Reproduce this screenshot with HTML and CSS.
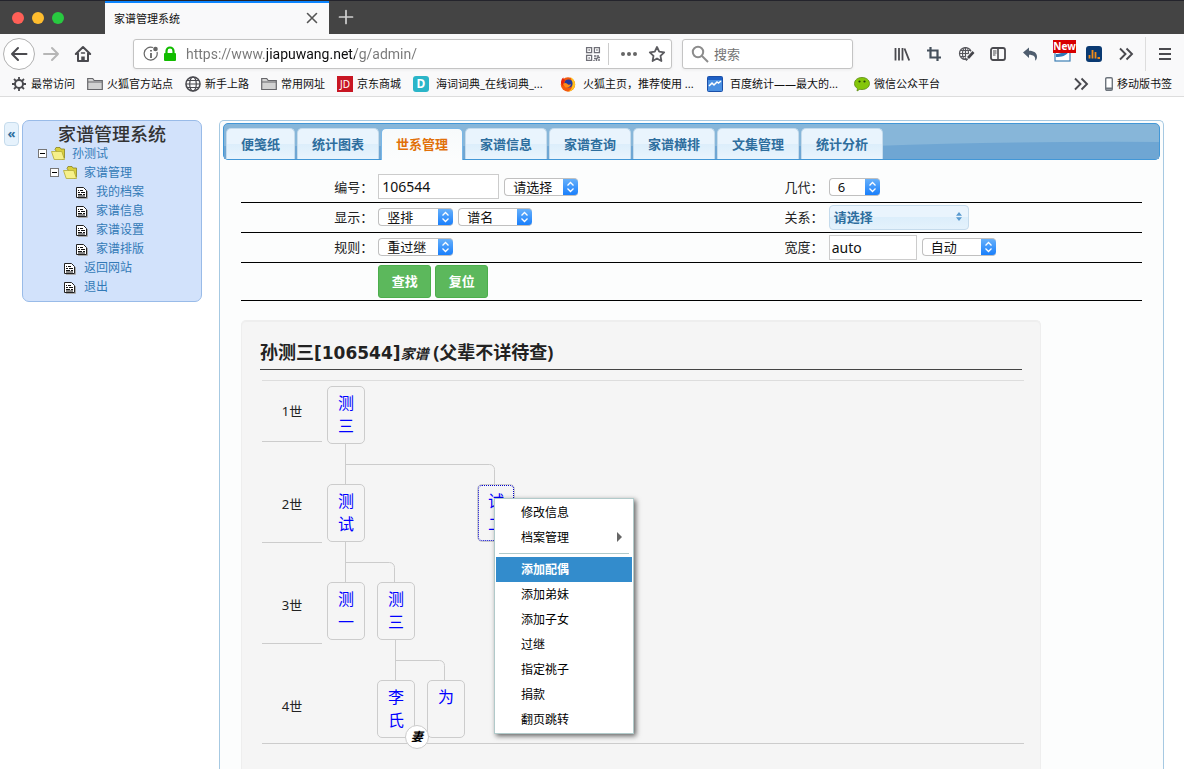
FILE: index.html
```
<!DOCTYPE html>
<html lang="zh-CN">
<head>
  <meta charset="UTF-8">
  <meta name="viewport" content="width=device-width, initial-scale=1.0">
  <title>家谱管理系统</title>
  <link rel="stylesheet" href="styles.css">
</head>
<body>
  <header class="browser">
    <div class="titlebar">
      <div class="lights">
        <span class="light red"></span>
        <span class="light yellow"></span>
        <span class="light green"></span>
      </div>
      <div class="browser-tab">
        <span>家谱管理系统</span>
        <button class="icon-btn tab-close" aria-label="关闭">
          <svg width="12" height="12" viewBox="0 0 12 12"><path d="M1.5 1.5l9 9M10.5 1.5l-9 9" stroke="#555" stroke-width="1.6" stroke-linecap="round"/></svg>
        </button>
      </div>
      <button class="icon-btn tab-new" aria-label="新标签">
        <svg width="16" height="16" viewBox="0 0 16 16"><path d="M8 1.500v13M1.500 8h13" stroke="#d0d0d0" stroke-width="1.700" stroke-linecap="round"/></svg>
      </button>
    </div>

    <div class="toolbar">
      <button class="icon-btn back" aria-label="后退">
        <svg width="18" height="18" viewBox="0 0 18 18" fill="none" stroke="#4a4a4f" stroke-width="2" stroke-linecap="round" stroke-linejoin="round"><path d="M16.500 9H2M8 3L2 9l6 6"/></svg>
      </button>
      <button class="icon-btn" aria-label="前进">
        <svg width="18" height="18" viewBox="0 0 18 18" fill="none" stroke="#b6b6b6" stroke-width="2" stroke-linecap="round" stroke-linejoin="round"><path d="M2 9h14M10 3l6 6-6 6"/></svg>
      </button>
      <button class="icon-btn" aria-label="主页">
        <svg width="18" height="18" viewBox="0 0 18 18" fill="none" stroke="#4a4a4f" stroke-width="2" stroke-linejoin="round" stroke-linecap="round"><path d="M1.800 9L9 2l7.200 7M4 8.500V16h10V8.500"/><path d="M9 16v-4.500" stroke-width="3.500" stroke-linecap="butt"/><path d="M7.500 8h3" stroke-width="1.500"/></svg>
      </button>
      <div class="urlbar">
        <svg width="16" height="16" viewBox="0 0 16 16" fill="none" stroke="#666"><path d="M10 1.500A6.500 6.500 0 1 0 14 6" stroke-width="1.200"/><path d="M8 7v5M8 4v1.600" stroke-width="1.800"/><circle cx="12.500" cy="3" r="2.300" fill="#666" stroke="none"/></svg>
        <svg class="lock" width="14" height="16" viewBox="0 0 14 16"><path d="M3.500 8V5a3.500 3.500 0 0 1 7 0v3" fill="none" stroke="#12bc00" stroke-width="2.200"/><rect x="1" y="7" width="12" height="8" rx="1" fill="#12bc00"/></svg>
        <input class="url-input" type="text" aria-label="地址" value="https://www.jiapuwang.net/g/admin/">
        <svg width="16" height="16" viewBox="0 0 16 16" fill="none" stroke="#707078" stroke-width="1.300"><path d="M1.600 1.600h5v5h-5zM9.400 1.600h5v5h-5zM1.600 9.400h5v5h-5z"/><path d="M3.500 4h1.300M11.300 4h1.300M3.500 12h1.300M9 10h2.500M13 9v2.500h2M9 12.500h2.500v2.500M13 14h2M9 15v-1M12 12h1" stroke-width="1.500"/></svg>
        <span class="url-sep"></span>
        <svg width="18" height="16" viewBox="0 0 18 16" fill="#666"><circle cx="3" cy="8" r="2"/><circle cx="9" cy="8" r="2"/><circle cx="15" cy="8" r="2"/></svg>
        <svg class="star" width="18" height="18" viewBox="0 0 18 18"><path d="M9 2l2.200 4.700 5 .7-3.700 3.500.9 5.100L9 13.500 4.600 16l.9-5.100L1.800 7.400l5-.7z" fill="none" stroke="#5c5c60" stroke-width="1.800" stroke-linejoin="round"/></svg>
      </div>
      <div class="searchbar">
        <svg width="18" height="18" viewBox="0 0 18 18" fill="none" stroke="#8c8c8c" stroke-width="2"><circle cx="7" cy="7" r="5.200"/><path d="M11 11l6 6"/></svg>
        <input class="search-input" type="text" placeholder="搜索" aria-label="搜索">
      </div>
      <div class="toolbar-icons">
        <button class="icon-btn" aria-label="我的足迹">
          <svg width="16" height="16" viewBox="0 0 16 16" stroke="#4a4a4f" stroke-width="1.800"><path d="M1.500 2v12.500M5 2v12.500M8.500 2v12.500M10.500 2.500l4.700 12"/></svg>
        </button>
        <button class="icon-btn" aria-label="截图">
          <svg width="16" height="16" viewBox="0 0 16 16" fill="none" stroke="#45505c" stroke-width="2.200"><path d="M4.500 1v10.500H15M1 4.500h10.500V15"/></svg>
        </button>
        <button class="icon-btn" aria-label="网页工具">
          <svg width="17" height="16" viewBox="0 0 17 16" fill="none" stroke="#55555a" stroke-width="1.200"><circle cx="7.500" cy="7.500" r="6"/><ellipse cx="7.500" cy="7.500" rx="3" ry="6"/><path d="M1.500 7.500h12M2.500 4.500h10M2.500 10.500h7M7.500 1.500v12"/><path d="M15.500 6.500L9 13" stroke="#f9f9fa" stroke-width="5"/><path d="M15.500 6l-5.500 6" stroke="#45454a" stroke-width="2.600"/><path d="M9.500 12.500L8 14.500" stroke-width="1.500"/></svg>
        </button>
        <button class="icon-btn" aria-label="侧栏">
          <svg width="16" height="16" viewBox="0 0 16 16" fill="none" stroke="#4a4a4f"><rect x="1" y="2" width="14" height="12" rx="2" stroke-width="1.800"/><path d="M8 2v12" stroke-width="1.600"/><path d="M3 5h3.500M3 7h3.500M3 9h2.500" stroke-width="1"/></svg>
        </button>
        <button class="icon-btn" aria-label="撤销">
          <svg width="16" height="16" viewBox="0 0 16 16"><path d="M1 6.500L7 1.500v3.200c5 0 8 2.300 8 6 0 2-.7 3-2 4 1-4-1.500-6-6-6v3.300z" fill="#4f5d6e"/></svg>
        </button>
        <button class="icon-btn new-btn" aria-label="新消息">
          <svg width="17" height="16" viewBox="0 0 17 16"><rect x="1" y="2" width="15" height="13" fill="#fff" stroke="#3d7fb5" stroke-width="1.200"/><path d="M2 8c4 0 7-2 13-3-2 5-8 6-13 6z" fill="#3179b5"/></svg>
          <span class="new-badge">New</span>
        </button>
        <button class="icon-btn" aria-label="统计">
          <svg width="16" height="16" viewBox="0 0 16 16"><rect width="16" height="16" rx="3" fill="#0a3a72"/><path d="M3.500 12.500V9M6.500 12.500V4M9.500 12.500V6M11.500 12h2.500" stroke="#f08c1a" stroke-width="1.800"/></svg>
        </button>
        <button class="icon-btn" aria-label="更多工具">
          <svg width="16" height="16" viewBox="0 0 16 16" fill="none" stroke="#4a4a4f" stroke-width="1.900"><path d="M2 2.500L7.500 8 2 13.500M8.500 2.500L14 8l-5.500 5.500"/></svg>
        </button>
      </div>
      <span class="toolbar-sep"></span>
      <button class="icon-btn" aria-label="菜单">
        <svg width="16" height="16" viewBox="0 0 16 16" stroke="#4a4a4f" stroke-width="2"><path d="M2 3h12M2 8h12M2 13h12"/></svg>
      </button>
    </div>

    <nav class="bookmarks">
      <a href="#"><svg width="16" height="16" viewBox="0 0 16 16" fill="none" stroke="#4a4a4f"><circle cx="8" cy="8" r="4" stroke-width="2"/><path d="M8 1v3M8 12v3M1 8h3M12 8h3M3 3l2.200 2.200M10.800 10.800L13 13M13 3l-2.200 2.200M5.200 10.800L3 13" stroke-width="1.800"/></svg><span>最常访问</span></a>
      <a href="#"><svg width="16" height="16" viewBox="0 0 16 16"><path d="M.7 13.500v-11h5l1.500 2h8.100v9z" fill="#d2d2d2" stroke="#66666a" stroke-width="1.200"/><path d="M1 6h14" stroke="#66666a"/></svg><span>火狐官方站点</span></a>
      <a href="#"><svg width="16" height="16" viewBox="0 0 16 16" fill="none" stroke="#4a4a4f" stroke-width="1.200"><circle cx="8" cy="8" r="7" stroke-width="1.600"/><ellipse cx="8" cy="8" rx="3.300" ry="7"/><path d="M1 8h14M2 4.500h12M2 11.500h12"/></svg><span>新手上路</span></a>
      <a href="#"><svg width="16" height="16" viewBox="0 0 16 16"><path d="M.7 13.500v-11h5l1.500 2h8.100v9z" fill="#d2d2d2" stroke="#66666a" stroke-width="1.200"/><path d="M1 6h14" stroke="#66666a"/></svg><span>常用网址</span></a>
      <a href="#"><span class="fav-jd">JD</span><span>京东商城</span></a>
      <a href="#" class="long"><span class="fav-d">D</span><span>海词词典_在线词典_...</span></a>
      <a href="#" class="long"><svg width="16" height="16" viewBox="0 0 16 16"><circle cx="8" cy="8.500" r="7.200" fill="#f2590c"/><path d="M1 7C1 4 2 2.500 3.500 1.500c0 1.500.5 2 1.500 2.500l-2 6z" fill="#e8230c"/><path d="M10.500 1c3.500 2 5 5 4.500 8.500-.6 3.500-3.500 6-7 6 4-2 6-5.500 2.500-14.500z" fill="#ffc320"/><circle cx="8.500" cy="7.500" r="4" fill="#223a9e"/><path d="M3 8c2-2 4-1 5 .5 1 .5 2 .2 3-.5-.5 3-3.500 4-5.500 3.500z" fill="#ff8a16"/></svg><span>火狐主页，推荐使用 ...</span></a>
      <a href="#" class="long"><svg width="16" height="16" viewBox="0 0 16 16"><rect x=".5" y=".5" width="15" height="15" rx="1" fill="#4a90e2" stroke="#1b4fa8"/><path d="M1 1h14v3H1z" fill="#1d5fc4"/><path d="M2 10l3-3 2 2 3-3 1.500 1L14 5" fill="none" stroke="#fff" stroke-width="1.500"/></svg><span>百度统计——最大的...</span></a>
      <a href="#"><svg width="16" height="16" viewBox="0 0 16 16"><path d="M8 1.500c4.300 0 7.500 2.500 7.500 6s-3.200 6-7.500 6c-.8 0-1.500 0-2.200-.2L3 15l.5-2.500C1.600 11.400.5 9.700.5 7.500c0-3.500 3.200-6 7.500-6z" fill="#84c60a" stroke="#5b8a10" stroke-width=".8"/><circle cx="5.500" cy="5.500" r="1.100" fill="#24400a"/><circle cx="10.500" cy="5.500" r="1.100" fill="#24400a"/></svg><span>微信公众平台</span></a>
      <button class="icon-btn bookmarks-more" aria-label="更多书签">
        <svg width="16" height="16" viewBox="0 0 16 16" fill="none" stroke="#4a4a4f" stroke-width="1.900"><path d="M2 2.500L7.500 8 2 13.500M8.500 2.500L14 8l-5.500 5.500"/></svg>
      </button>
      <a href="#" class="mobile"><svg width="8" height="14" viewBox="0 0 8 14"><rect x=".7" y=".7" width="6.600" height="12.600" rx="1.200" fill="#fff" stroke="#6d747c" stroke-width="1.400"/><path d="M1 11.500h6" stroke="#6d747c" stroke-width="2"/></svg><span>移动版书签</span></a>
    </nav>
  </header>

  <svg class="symbols" aria-hidden="true">
    <symbol id="minus" viewBox="0 0 9 9"><rect x=".5" y=".5" width="8" height="8" fill="#fff" stroke="#777"/><path d="M2 4.500h5" stroke="#000"/></symbol>
    <symbol id="folder" viewBox="0 0 15 13"><path d="M4 2.500l1-2h4l1 1.500h3.500v9l-2 1.500z" fill="#d9cf3c" stroke="#8a8420" stroke-width=".8"/><path d="M.5 4.500h10.300l2.700 8H3.200z" fill="#f6f08a" stroke="#b3aa35" stroke-width=".8"/></symbol>
    <symbol id="doc" viewBox="0 0 12 12"><path d="M2 11.500h9.500V4" stroke="#aaa" fill="none"/><path d="M.5 .5h7l3 3v7H.5z" fill="#fff" stroke="#222"/><path d="M2 3.500h1M4 3.500h3M2 5.500h2M5 5.500h4M2 7.500h4M7 7.500h2M2 9h7" stroke="#111"/></symbol>
  </svg>

  <div class="page">
    <button class="collapse" aria-label="收起">«</button>

    <aside class="sidebar">
      <h1>家谱管理系统</h1>
      <ul class="menu-tree">
        <li>
          <div class="row"><svg class="toggle"><use href="#minus"/></svg><svg class="folder"><use href="#folder"/></svg><a href="#">孙测试</a></div>
          <ul>
            <li>
              <div class="row"><svg class="toggle"><use href="#minus"/></svg><svg class="folder"><use href="#folder"/></svg><a href="#">家谱管理</a></div>
              <ul>
                <li class="row leaf"><svg class="doc"><use href="#doc"/></svg><a href="#">我的档案</a></li>
                <li class="row leaf"><svg class="doc"><use href="#doc"/></svg><a href="#">家谱信息</a></li>
                <li class="row leaf"><svg class="doc"><use href="#doc"/></svg><a href="#">家谱设置</a></li>
                <li class="row leaf"><svg class="doc"><use href="#doc"/></svg><a href="#">家谱排版</a></li>
              </ul>
            </li>
            <li class="row leaf"><svg class="doc"><use href="#doc"/></svg><a href="#">返回网站</a></li>
            <li class="row leaf"><svg class="doc"><use href="#doc"/></svg><a href="#">退出</a></li>
          </ul>
        </li>
      </ul>
    </aside>

    <main class="main">
      <nav class="tabs">
        <svg class="wave" viewBox="0 0 936 35" preserveAspectRatio="none"><path d="M0 22 H650 Q800 17 936 18 V35 H0z" fill="#6fa6d3"/></svg>
        <a href="#">便笺纸</a>
        <a href="#">统计图表</a>
        <a href="#" class="active">世系管理</a>
        <a href="#">家谱信息</a>
        <a href="#">家谱查询</a>
        <a href="#">家谱横排</a>
        <a href="#">文集管理</a>
        <a href="#">统计分析</a>
      </nav>

      <form class="filter">
        <table>
          <tr>
            <th><label for="number">编号：</label></th>
            <td><div class="fields">
              <input class="text number" id="number" type="text" value="106544">
              <select class="w74" aria-label="选择"><option>请选择</option></select>
            </div></td>
            <th><label for="generations">几代：</label></th>
            <td><div class="fields">
              <select class="w51" id="generations"><option>6</option></select>
            </div></td>
          </tr>
          <tr>
            <th><label for="display">显示：</label></th>
            <td><div class="fields">
              <select class="w75" id="display"><option>竖排</option></select>
              <select class="w74" aria-label="名字"><option>谱名</option></select>
            </div></td>
            <th><label for="relation">关系：</label></th>
            <td><div class="fields">
              <button class="multiselect" id="relation" type="button">请选择
                <svg width="6" height="9" viewBox="0 0 6 9" fill="#5a9bd0"><path d="M3 0l3 3.700H0zM3 9L0 5.300h6z"/></svg>
              </button>
            </div></td>
          </tr>
          <tr>
            <th><label for="rule">规则：</label></th>
            <td><div class="fields">
              <select class="w75" id="rule"><option>重过继</option></select>
            </div></td>
            <th><label for="width">宽度：</label></th>
            <td><div class="fields">
              <input class="text width" id="width" type="text" value="auto">
              <select class="w74" aria-label="宽度方式"><option>自动</option></select>
            </div></td>
          </tr>
          <tr class="actions">
            <th></th>
            <td colspan="3"><div class="fields">
              <button class="btn" type="button">查找</button>
              <button class="btn" type="button">复位</button>
            </div></td>
          </tr>
        </table>
      </form>

      <section class="well">
        <h2>孙测三<span class="code">[106544]</span><i>家谱</i> (父辈不详待查)</h2>
        <div class="chart">
          <div class="generations">
            <span>1世</span>
            <span>2世</span>
            <span>3世</span>
            <span>4世</span>
          </div>
          <div class="nodes">
            <svg class="lines" width="200" height="360" viewBox="0 0 200 360" fill="none" stroke="#ccc">
              <path d="M18.500 58v40M18.500 78.500H162.500a5 5 0 0 1 5 5V98"/>
              <path d="M18.500 156v40M18.500 176.500H62.500a5 5 0 0 1 5 5V196"/>
              <path d="M68.500 254v40M68.500 274.500H112.500a5 5 0 0 1 5 5V294"/>
            </svg>
            <a href="#" class="node c1 r1">测三</a>
            <a href="#" class="node c1 r2">测试</a>
            <a href="#" class="node c4 r2 focused">试二</a>
            <a href="#" class="node c1 r3">测一</a>
            <a href="#" class="node c2 r3">测三</a>
            <a href="#" class="node c2 r4">李氏<span class="wife">妻</span></a>
            <a href="#" class="node c3 r4">为</a>

            <ul class="context-menu">
              <li>修改信息</li>
              <li class="has-sub">档案管理</li>
              <li class="divider"></li>
              <li class="selected">添加配偶</li>
              <li>添加弟妹</li>
              <li>添加子女</li>
              <li>过继</li>
              <li>指定祧子</li>
              <li>捐款</li>
              <li>翻页跳转</li>
            </ul>
          </div>
        </div>
      </section>
    </main>
  </div>
</body>
</html>
```
FILE: styles.css
```
* {
  box-sizing: border-box;
}
body {
  margin: 0;
  min-height: 100vh;
  display: flex;
  flex-direction: column;
  background: #fff;
  color: #222;
  font-family: "Noto Sans", "Noto Sans CJK SC", sans-serif;
  font-size: 13px;
}
a {
  color: inherit;
  text-decoration: none;
}
ul {
  list-style: none;
  margin: 0;
  padding: 0;
}
svg {
  display: block;
  flex: none;
}
input, select, button {
  font-family: inherit;
  margin: 0;
}
.symbols {
  position: absolute;
  width: 0;
  height: 0;
}

/* browser */
.browser {
  flex: none;
  background: #f9f9fa;
  border-bottom: 1px solid #ddd;
  color: #111;
}
.titlebar {
  display: flex;
  height: 34px;
  background: #444;
  border-top: 1px solid #24242c;
}
.lights {
  display: flex;
  align-items: center;
  gap: 8px;
  width: 105px;
  padding-left: 12px;
}
.light {
  width: 12px;
  height: 12px;
  border-radius: 50%;
}
.red {
  background: #ff5f57;
}
.yellow {
  background: #ffbd2e;
}
.green {
  background: #28c940;
}
.browser-tab {
  display: flex;
  align-items: center;
  justify-content: space-between;
  width: 224px;
  padding: 0 11px 2px 9px;
  background: #f9f9fa;
  border-top: 2px solid #0a84ff;
  font-size: 11px;
}
.icon-btn {
  display: flex;
  align-items: center;
  justify-content: center;
  flex: none;
  width: 32px;
  height: 32px;
  padding: 0;
  border: 0;
  background: none;
}
.tab-close {
  width: 12px;
  height: 12px;
}
.tab-new {
  width: 34px;
}
.toolbar {
  display: flex;
  align-items: center;
  height: 40px;
  padding: 0 3px;
}
.back {
  border: 1px solid #b1b1b1;
  border-radius: 50%;
  background: #fff;
}
.urlbar, .searchbar {
  display: flex;
  align-items: center;
  min-width: 0;
  height: 30px;
  background: #fff;
  border: 1px solid #c4c4c4;
  border-radius: 3px;
  box-shadow: 0 1px 3px rgba(0, 0, 0, 0.06);
}
.urlbar {
  flex: 523;
  margin-left: 34px;
  padding: 0 5px 0 9px;
}
.lock {
  margin-left: 4px;
}
.urlbar input, .searchbar input {
  flex: 1;
  min-width: 0;
  height: 28px;
  border: 0;
  padding: 0;
  outline: 0;
  background: none;
}
/* only the domain is dark */
.urlbar .url-input {
  margin-left: 9px;
  font-family: Roboto, sans-serif;
  font-size: 14px;
  color: transparent;
  background: linear-gradient(90deg, #777 80px, #0c0c0d 80px, #0c0c0d 169px, #777 169px);
  -webkit-background-clip: text;
  background-clip: text;
}
.url-sep {
  width: 1px;
  height: 22px;
  margin: 0 11px 0 7px;
  background: #ccc;
}
.star {
  margin-left: 10px;
}
.searchbar {
  flex: 161;
  margin-left: 10px;
  padding-left: 8px;
  gap: 5px;
}
.search-input {
  font-size: 13px;
}
.search-input::placeholder {
  color: #737373;
}
.toolbar-icons {
  display: flex;
  margin-left: 33px;
}
.toolbar-sep {
  width: 1px;
  height: 34px;
  margin: 0 3px;
  background: #ddd;
}
.new-btn {
  position: relative;
}
.new-badge {
  position: absolute;
  top: 2px;
  left: 7px;
  width: 23px;
  background: #d70000;
  color: #fff;
  font-size: 10px;
  font-weight: bold;
  line-height: 13px;
}
.bookmarks {
  display: flex;
  align-items: center;
  gap: 12px;
  height: 22px;
  padding: 0 12px 2px 11px;
  font-size: 11px;
  line-height: 16px;
  white-space: nowrap;
}
.bookmarks a {
  display: flex;
  align-items: center;
  gap: 4px;
}
.bookmarks .long {
  width: 135px;
  gap: 7px;
}
.bookmarks-more {
  width: 16px;
  height: 16px;
  margin-left: auto;
  margin-right: 4px;
}
.fav-jd, .fav-d {
  width: 16px;
  height: 16px;
  background: #c81623;
  color: #fff;
  text-align: center;
  font-size: 10px;
}
.fav-d {
  border-radius: 3px;
  background: #2bb5c8;
  font-size: 12px;
  font-weight: bold;
}

/* page */
.page {
  flex: 1;
  display: flex;
  align-items: flex-start;
  padding: 23px 20px 0 4px;
}
.collapse {
  width: 15px;
  height: 24px;
  margin: 2px 3px 0 0;
  padding: 0 0 2px;
  border: 1px solid #c5dbec;
  border-radius: 4px;
  background: #e6f2fc;
  color: #2e6e9e;
  font-size: 13px;
  font-weight: bold;
  line-height: 20px;
}
.sidebar {
  flex: none;
  width: 180px;
  height: 182px;
  padding: 4px 0 0 15px;
  border: 1px solid #99bbe8;
  border-radius: 7px;
  background: #d2e2fb;
}
.sidebar h1 {
  margin: 0 15px 0 0;
  font-size: 18px;
  font-weight: 500;
  line-height: 19px;
  text-align: center;
  color: #333;
}
.menu-tree {
  font-size: 12px;
  line-height: 19px;
  color: #337ab7;
}
.menu-tree ul {
  padding-left: 12px;
}
.row {
  display: flex;
  align-items: center;
  height: 19px;
}
.leaf {
  padding-left: 14px;
}
.toggle {
  width: 9px;
  height: 9px;
  margin-right: 4px;
}
.folder {
  width: 15px;
  height: 13px;
  margin-right: 6px;
}
.doc {
  width: 12px;
  height: 12px;
  margin: 3px 8px 0 0;
}

.main {
  flex: 1;
  align-self: stretch;
  display: flex;
  flex-direction: column;
  margin-left: 17px;
  padding: 2px 3px 0;
  border: 1px solid #a6c9e2;
  border-bottom: 0;
  border-radius: 5px 5px 0 0;
  background: #fcfdfd;
}
.tabs {
  position: relative;
  display: flex;
  gap: 2px;
  height: 37px;
  padding: 4px 2px 0;
  border: 1px solid #4297d7;
  border-radius: 5px;
  background: #87b6d9;
}
.wave {
  position: absolute;
  left: 0;
  top: 0;
  width: 100%;
  height: 100%;
}
.tabs a {
  position: relative;
  height: 31px;
  padding: 0 14px;
  border: 1px solid #c5dbec;
  border-bottom: 0;
  border-radius: 5px 5px 0 0;
  background: linear-gradient(#e9f4fd 50%, #dceefb 50%, #e9f4fd);
  color: #2e6e9e;
  font-weight: bold;
  line-height: 30px;
}
.tabs .active {
  height: 32px;
  border-color: #79b7e7;
  background: linear-gradient(#f7fafb, #fcfdfd);
  color: #e17009;
}

.filter {
  margin: 12px 18px 0;
}
.filter table {
  width: 100%;
  table-layout: fixed;
  border-collapse: collapse;
}
.filter th {
  width: 15%;
  padding: 0 3px 0 0;
  font-weight: normal;
  text-align: right;
  line-height: 20px;
}
.filter td {
  width: 35%;
  padding: 0 0 0 2px;
}
.filter tr {
  height: 30px;
  border-bottom: 1px solid #000;
}
.filter .actions {
  height: 38px;
}
.fields {
  display: flex;
  align-items: center;
  gap: 5px;
}
.actions .fields {
  gap: 4px;
}
.text {
  height: 25px;
  padding: 0 3px;
  border: 1px solid #ccc;
  background: #fff;
  color: #111;
  font-size: 14px;
}
.number {
  width: 121px;
}
.width {
  width: 88px;
  padding: 0 2px;
}
select {
  height: 18px;
  padding: 0 20px 0 8px;
  appearance: none;
  border: 1px solid #c0c0c0;
  border-right: 0;
  border-radius: 4px;
  background:
    url("data:image/svg+xml,%3Csvg xmlns='http://www.w3.org/2000/svg' width='15' height='18' fill='none' stroke='white' stroke-width='1.300'%3E%3Cpath d='M4.500 7.500l3-3 3 3M4.500 10.500l3 3 3-3'/%3E%3C/svg%3E") right center / 15px 18px no-repeat border-box,
    linear-gradient(#6bb3fa, #147cfc) right / 15px 18px no-repeat border-box,
    #fff;
  color: #111;
  font-size: 13px;
  line-height: 16px;
}
.w51 {
  width: 51px;
}
.w74 {
  width: 74px;
}
.w75 {
  width: 75px;
}
.multiselect {
  display: flex;
  align-items: center;
  justify-content: space-between;
  width: 140px;
  height: 25px;
  padding: 0 6px 2px 4px;
  border: 1px solid #c5dbec;
  border-radius: 4px;
  background: linear-gradient(#e9f4fd 50%, #dceefb 50%, #e4f2fc);
  color: #2e6e9e;
  font-size: 13px;
  font-weight: bold;
}
.btn {
  width: 53px;
  height: 33px;
  padding: 0 0 2px;
  border: 1px solid #4cae4c;
  border-radius: 3px;
  background: #5cb85c;
  color: #fff;
  font-size: 13px;
  font-weight: bold;
}

.well {
  flex: 1;
  width: 100%;
  max-width: 800px;
  margin: 19px 18px 0;
  padding: 20px 18px 24px;
  border: 1px solid #eee;
  border-bottom: 0;
  border-radius: 5px 5px 0 0;
  background: #f5f5f5;
  box-shadow: inset 0 1px 1px rgba(0, 0, 0, 0.03);
}
.well h2 {
  margin: 0;
  padding-bottom: 4px;
  border-bottom: 1px solid #444;
  font-size: 18px;
  font-weight: bold;
  line-height: 22px;
}
.well h2 .code {
  font-family: "DejaVu Sans", sans-serif;
  font-size: 17px;
}
.well h2 i {
  font-size: 14px;
}

/* family chart */
.chart {
  display: flex;
  gap: 5px;
  margin: 10px -2px 0 2px;
  border-top: 1px solid #ddd;
  border-bottom: 1px solid #ccc;
}
.generations {
  width: 60px;
}
.generations span {
  display: block;
  height: 101px;
  padding-top: 24px;
  border-bottom: 1px solid #ccc;
  text-align: center;
  line-height: 76px;
}
.generations span:first-child {
  height: 61px;
  padding-top: 0;
  line-height: 60px;
}
.generations span:last-child {
  height: 99px;
  border-bottom: 0;
}
.nodes {
  position: relative;
  flex: 1;
  display: grid;
  grid-template-columns: repeat(4, 38px);
  grid-template-rows: repeat(4, 58px);
  column-gap: 12px;
  row-gap: 40px;
  padding-top: 5px;
}
.lines {
  position: absolute;
  left: 0;
  top: 5px;
}
.node {
  position: relative;
  padding: 5px 10px;
  border: 1px solid #ccc;
  border-radius: 5px;
  color: #00f;
  font-size: 16px;
  line-height: 23px;
}
.c1 { grid-column: 1; }
.c2 { grid-column: 2; }
.c3 { grid-column: 3; }
.c4 { grid-column: 4; }
.r1 { grid-row: 1; }
.r2 { grid-row: 2; }
.r3 { grid-row: 3; }
.r4 { grid-row: 4; }
.focused {
  outline: 1px dotted #00c;
  outline-offset: -2px;
}
.wife {
  position: absolute;
  right: -15px;
  bottom: -12px;
  z-index: 1;
  width: 24px;
  height: 24px;
  border: 1px solid #ccc;
  border-radius: 50%;
  background: #fff;
  color: #000;
  font-size: 12px;
  font-style: italic;
  font-weight: bold;
  line-height: 22px;
  text-align: center;
}
.context-menu {
  position: absolute;
  left: 167px;
  top: 117px;
  z-index: 2;
  width: 140px;
  padding: 1px;
  border: 1px solid #b1caca;
  background: #fff;
  box-shadow: 2px 2px 5px rgba(0, 0, 0, 0.6);
  color: #000;
  font-size: 12px;
  line-height: 25px;
}
.context-menu li {
  height: 25px;
  padding-left: 25px;
}
.context-menu .selected {
  background: #338ccc;
  color: #fff;
  font-weight: bold;
}
.context-menu .divider {
  height: 1px;
  margin: 3px;
  background: #b1caca;
}
.has-sub {
  display: flex;
  align-items: center;
  justify-content: space-between;
}
.has-sub::after {
  content: "";
  margin-right: 10px;
  border: 5px solid transparent;
  border-left-color: #666;
  border-right-width: 0;
}
```
